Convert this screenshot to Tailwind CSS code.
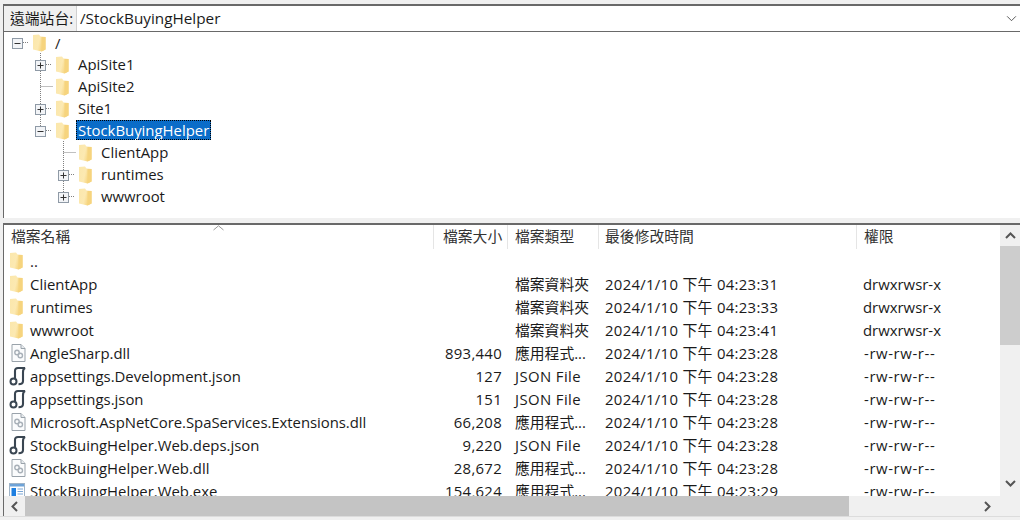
<!DOCTYPE html>
<html>
<head>
<meta charset="utf-8">
<script src="https://cdn.jsdelivr.net/npm/@tailwindcss/browser@4"></script>
</head>
<body class="w-[1020px] h-[520px] overflow-hidden bg-[#f0f0f0] font-['Open_Sans','Noto_Sans_CJK_TC',sans-serif] text-[14.9px] text-[#1a1a1a]">
<svg width="0" height="0" class="absolute">
  <defs>
    <linearGradient id="fg" x1="0" y1="0" x2="1" y2="0.3"><stop offset="0" stop-color="#fbe7ab"/><stop offset="0.55" stop-color="#fce9b2"/><stop offset="1" stop-color="#f5cf70"/></linearGradient>
    <symbol id="folder" viewBox="0 0 13 18">
      <path d="M0 1 L6 0.5 L7.5 2.5 L12.5 3 L12.5 15.5 L8.5 17.5 L0 15.5 Z" fill="url(#fg)"/>
      <path d="M8.5 3 L12.5 3 L12.5 15.5 L8.5 17.5 Z" fill="#f6d47e"/>
    </symbol>
    <symbol id="dll" viewBox="0 0 15 18">
      <path d="M1 .5 H10 L14 4.5 V17.5 H1 Z" fill="#fbfcfd" stroke="#9aa3ab"/>
      <path d="M10 .5 V4.5 H14" fill="#e8ecef" stroke="#9aa3ab"/>
      <circle cx="6" cy="8.5" r="2.2" fill="none" stroke="#a8b0b8" stroke-width="1.4"/>
      <circle cx="9.3" cy="11.5" r="2.2" fill="none" stroke="#a8b0b8" stroke-width="1.4"/>
    </symbol>
    <symbol id="json" viewBox="0 0 17 20">
      <path d="M6 13 V5 Q6 2 9 2 H16 Q14 3 14 6 V15 Q14 18.3 9.5 18.3" fill="none" stroke="#3a4652" stroke-width="2.1"/>
      <circle cx="4.5" cy="15.5" r="3" fill="#fff" stroke="#3a4652" stroke-width="2"/>
    </symbol>
    <symbol id="exe" viewBox="0 0 16 16">
      <rect x=".5" y=".5" width="15" height="15" fill="#fff" stroke="#9fb4c8"/>
      <rect x="1" y="1" width="14" height="2.5" fill="#6ea3d8"/>
      <rect x="2.5" y="5" width="4.5" height="8" fill="#1e7fe0"/>
      <path d="M8.5 6H14M8.5 8.5H14M8.5 11H14" stroke="#7aa6d6"/>
    </symbol>
    <symbol id="plus" viewBox="0 0 11 11">
      <rect x=".5" y=".5" width="10" height="10" fill="#f2f4f7" stroke="#8f9aa6"/>
      <path d="M2.5 5.5H8.5M5.5 2.5V8.5" stroke="#333"/>
    </symbol>
    <symbol id="minus" viewBox="0 0 11 11">
      <rect x=".5" y=".5" width="10" height="10" fill="#f2f4f7" stroke="#8f9aa6"/>
      <path d="M2.5 5.5H8.5" stroke="#333"/>
    </symbol>
  </defs>
</svg>

<div class="h-[4px]"></div>
<section class="ml-[3px] border-l border-t-2 border-[#696969] bg-white">
  <div class="flex h-[26px] border-b border-[#696969] items-stretch">
    <div class="w-[73px] shrink-0 bg-[#f0f0f0] border-r border-[#d0d0d0] flex items-center pl-[6px] whitespace-nowrap text-[14.8px]">遠端站台:</div>
    <div class="flex-1 flex items-center pl-[3px] text-[15.3px]">/StockBuyingHelper</div>
    <svg class="w-[11px] h-[7px] mr-[3px] self-center" viewBox="0 0 12 8"><path d="M1 1.5 L6 6.5 L11 1.5" fill="none" stroke="#444" stroke-width="1"/></svg>
  </div>
  <div class="relative h-[186px]">
    <svg class="absolute left-0 top-0" width="100" height="186" fill="none" stroke="#808080" stroke-dasharray="1 1">
      <path d="M19 10.5H25M36.5 21V98M42 32.5H48M36.5 54.5H49M42 76.5H48M42 98.5H48M59.5 109V160M59.5 120.5H72M65 142.5H71M65 164.5H71"/>
    </svg>
    <div class="flex flex-col relative">
      <div class="flex items-center h-[22px] pl-[8px]"><svg class="w-[11px] h-[11px] mr-[10px]"><use href="#minus"/></svg><svg class="w-[13px] h-[18px]"><use href="#folder"/></svg><span class="ml-[7px] px-[2px]">/</span></div>
      <div class="flex items-center h-[22px] pl-[31px]"><svg class="w-[11px] h-[11px] mr-[10px]"><use href="#plus"/></svg><svg class="w-[13px] h-[18px]"><use href="#folder"/></svg><span class="ml-[7px] px-[2px] -translate-y-px">ApiSite1</span></div>
      <div class="flex items-center h-[22px] pl-[52px]"><svg class="w-[13px] h-[18px]"><use href="#folder"/></svg><span class="ml-[7px] px-[2px] -translate-y-px">ApiSite2</span></div>
      <div class="flex items-center h-[22px] pl-[31px]"><svg class="w-[11px] h-[11px] mr-[10px]"><use href="#plus"/></svg><svg class="w-[13px] h-[18px]"><use href="#folder"/></svg><span class="ml-[7px] px-[2px] -translate-y-px">Site1</span></div>
      <div class="flex items-center h-[22px] pl-[31px]"><svg class="w-[11px] h-[11px] mr-[10px]"><use href="#minus"/></svg><svg class="w-[13px] h-[18px]"><use href="#folder"/></svg><span class="ml-[7px] px-[2px] -translate-y-px bg-[#0a6cc8] text-white outline-1 outline-dotted outline-black -outline-offset-1 leading-[20px]">StockBuyingHelper</span></div>
      <div class="flex items-center h-[22px] pl-[75px]"><svg class="w-[13px] h-[18px]"><use href="#folder"/></svg><span class="ml-[7px] px-[2px] -translate-y-px">ClientApp</span></div>
      <div class="flex items-center h-[22px] pl-[54px]"><svg class="w-[11px] h-[11px] mr-[10px]"><use href="#plus"/></svg><svg class="w-[13px] h-[18px]"><use href="#folder"/></svg><span class="ml-[7px] px-[2px] -translate-y-px">runtimes</span></div>
      <div class="flex items-center h-[22px] pl-[54px]"><svg class="w-[11px] h-[11px] mr-[10px]"><use href="#plus"/></svg><svg class="w-[13px] h-[18px]"><use href="#folder"/></svg><span class="ml-[7px] px-[2px] -translate-y-px">wwwroot</span></div>
    </div>
  </div>
</section>

<div class="h-[5px]"></div>

<section class="ml-[3px] border-l border-t-2 border-[#696969] bg-white h-[293px] flex flex-col">
  <div class="flex flex-1 min-h-0">
    <div class="flex-1 min-w-0 overflow-hidden">
      <div class="relative flex h-[24px] items-stretch text-[14.8px] text-[#333] leading-[22px]">
        <svg class="absolute left-[209px] top-0" width="11" height="6"><path d="M.5 5 L5.5 .8 L10.5 5" fill="none" stroke="#9a9a9a"/></svg>
        <div class="w-[429px] pl-[7px]">檔案名稱</div>
        <div class="w-[74px] border-l border-[#e5e5e5] pl-[9px]">檔案大小</div>
        <div class="w-[91px] border-l border-[#e5e5e5] pl-[7px]">檔案類型</div>
        <div class="w-[258px] border-l border-[#e5e5e5] pl-[6px]">最後修改時間</div>
        <div class="w-[144px] border-l border-[#e5e5e5] pl-[7px]">權限</div>
      </div>
      <div class="mt-[1px] grid grid-cols-[429px_74px_91px_258px_144px] auto-rows-[23px] items-center whitespace-nowrap">
        <div class="flex items-center pl-[6px] gap-[7px]"><svg class="w-[13px] h-[18px]"><use href="#folder"/></svg><span>..</span></div><div></div><div></div><div></div><div></div>
        <div class="flex items-center pl-[6px] gap-[7px]"><svg class="w-[13px] h-[18px]"><use href="#folder"/></svg><span>ClientApp</span></div><div></div><div class="pl-[8px] text-[14.8px]">檔案資料夾</div><div class="pl-[7px] tracking-[0.3px]">2024/1/10 下午 04:23:31</div><div class="pl-[7px]">drwxrwsr-x</div>
        <div class="flex items-center pl-[6px] gap-[7px]"><svg class="w-[13px] h-[18px]"><use href="#folder"/></svg><span>runtimes</span></div><div></div><div class="pl-[8px] text-[14.8px]">檔案資料夾</div><div class="pl-[7px] tracking-[0.3px]">2024/1/10 下午 04:23:33</div><div class="pl-[7px]">drwxrwsr-x</div>
        <div class="flex items-center pl-[6px] gap-[7px]"><svg class="w-[13px] h-[18px]"><use href="#folder"/></svg><span>wwwroot</span></div><div></div><div class="pl-[8px] text-[14.8px]">檔案資料夾</div><div class="pl-[7px] tracking-[0.3px]">2024/1/10 下午 04:23:41</div><div class="pl-[7px]">drwxrwsr-x</div>
        <div class="flex items-center pl-[7px] gap-[4px]"><svg class="w-[15px] h-[18px]"><use href="#dll"/></svg><span>AngleSharp.dll</span></div><div class="text-right pr-[5px] tracking-[0.3px]">893,440</div><div class="pl-[8px] text-[14.8px]">應用程式...</div><div class="pl-[7px] tracking-[0.3px]">2024/1/10 下午 04:23:28</div><div class="pl-[8px] tracking-[0.6px]">-rw-rw-r--</div>
        <div class="flex items-center pl-[5px] gap-[4px]"><svg class="w-[17px] h-[20px]"><use href="#json"/></svg><span>appsettings.Development.json</span></div><div class="text-right pr-[5px] tracking-[0.3px]">127</div><div class="pl-[8px] tracking-[0.4px]">JSON File</div><div class="pl-[7px] tracking-[0.3px]">2024/1/10 下午 04:23:28</div><div class="pl-[8px] tracking-[0.6px]">-rw-rw-r--</div>
        <div class="flex items-center pl-[5px] gap-[4px]"><svg class="w-[17px] h-[20px]"><use href="#json"/></svg><span>appsettings.json</span></div><div class="text-right pr-[5px] tracking-[0.3px]">151</div><div class="pl-[8px] tracking-[0.4px]">JSON File</div><div class="pl-[7px] tracking-[0.3px]">2024/1/10 下午 04:23:28</div><div class="pl-[8px] tracking-[0.6px]">-rw-rw-r--</div>
        <div class="flex items-center pl-[7px] gap-[4px]"><svg class="w-[15px] h-[18px]"><use href="#dll"/></svg><span class="tracking-[-0.04px]">Microsoft.AspNetCore.SpaServices.Extensions.dll</span></div><div class="text-right pr-[5px] tracking-[0.3px]">66,208</div><div class="pl-[8px] text-[14.8px]">應用程式...</div><div class="pl-[7px] tracking-[0.3px]">2024/1/10 下午 04:23:28</div><div class="pl-[8px] tracking-[0.6px]">-rw-rw-r--</div>
        <div class="flex items-center pl-[5px] gap-[4px]"><svg class="w-[17px] h-[20px]"><use href="#json"/></svg><span>StockBuingHelper.Web.deps.json</span></div><div class="text-right pr-[5px] tracking-[0.3px]">9,220</div><div class="pl-[8px] tracking-[0.4px]">JSON File</div><div class="pl-[7px] tracking-[0.3px]">2024/1/10 下午 04:23:28</div><div class="pl-[8px] tracking-[0.6px]">-rw-rw-r--</div>
        <div class="flex items-center pl-[7px] gap-[4px]"><svg class="w-[15px] h-[18px]"><use href="#dll"/></svg><span>StockBuingHelper.Web.dll</span></div><div class="text-right pr-[5px] tracking-[0.3px]">28,672</div><div class="pl-[8px] text-[14.8px]">應用程式...</div><div class="pl-[7px] tracking-[0.3px]">2024/1/10 下午 04:23:28</div><div class="pl-[8px] tracking-[0.6px]">-rw-rw-r--</div>
        <div class="flex items-center pl-[5px] gap-[5px]"><svg class="w-[16px] h-[16px]"><use href="#exe"/></svg><span>StockBuingHelper.Web.exe</span></div><div class="text-right pr-[5px] tracking-[0.3px]">154,624</div><div class="pl-[8px] text-[14.8px]">應用程式...</div><div class="pl-[7px] tracking-[0.3px]">2024/1/10 下午 04:23:29</div><div class="pl-[8px] tracking-[0.6px]">-rw-rw-r--</div>
      </div>
    </div>
    <div class="w-[20px] bg-[#f0f0f0] flex flex-col items-center shrink-0">
      <div class="h-[21px] flex items-center justify-center"><svg width="11" height="7"><path d="M1 6 L5.5 1.5 L10 6" fill="none" stroke="#555" stroke-width="2"/></svg></div>
      <div class="w-full h-[99px] bg-[#cdcdcd]"></div>
      <div class="flex-1"></div>
      <div class="h-[22px] pb-[4px] flex items-center justify-center"><svg width="11" height="7"><path d="M1 1 L5.5 5.5 L10 1" fill="none" stroke="#555" stroke-width="2"/></svg></div>
    </div>
  </div>
  <div class="h-[20px] bg-[#f0f0f0] flex items-center shrink-0">
    <div class="w-[21px] flex justify-center"><svg width="7" height="11"><path d="M6 1 L1.5 5.5 L6 10" fill="none" stroke="#555" stroke-width="2"/></svg></div>
    <div class="w-[824px] h-full bg-[#c4c4c4]"></div>
    <div class="flex-1"></div>
    <div class="w-[20px] flex justify-center mr-[23px]"><svg width="7" height="11"><path d="M1 1 L5.5 5.5 L1 10" fill="none" stroke="#555" stroke-width="2"/></svg></div>
  </div>
</section>
<div class="h-px bg-[#dcdcdc]"></div>
</body>
</html>
